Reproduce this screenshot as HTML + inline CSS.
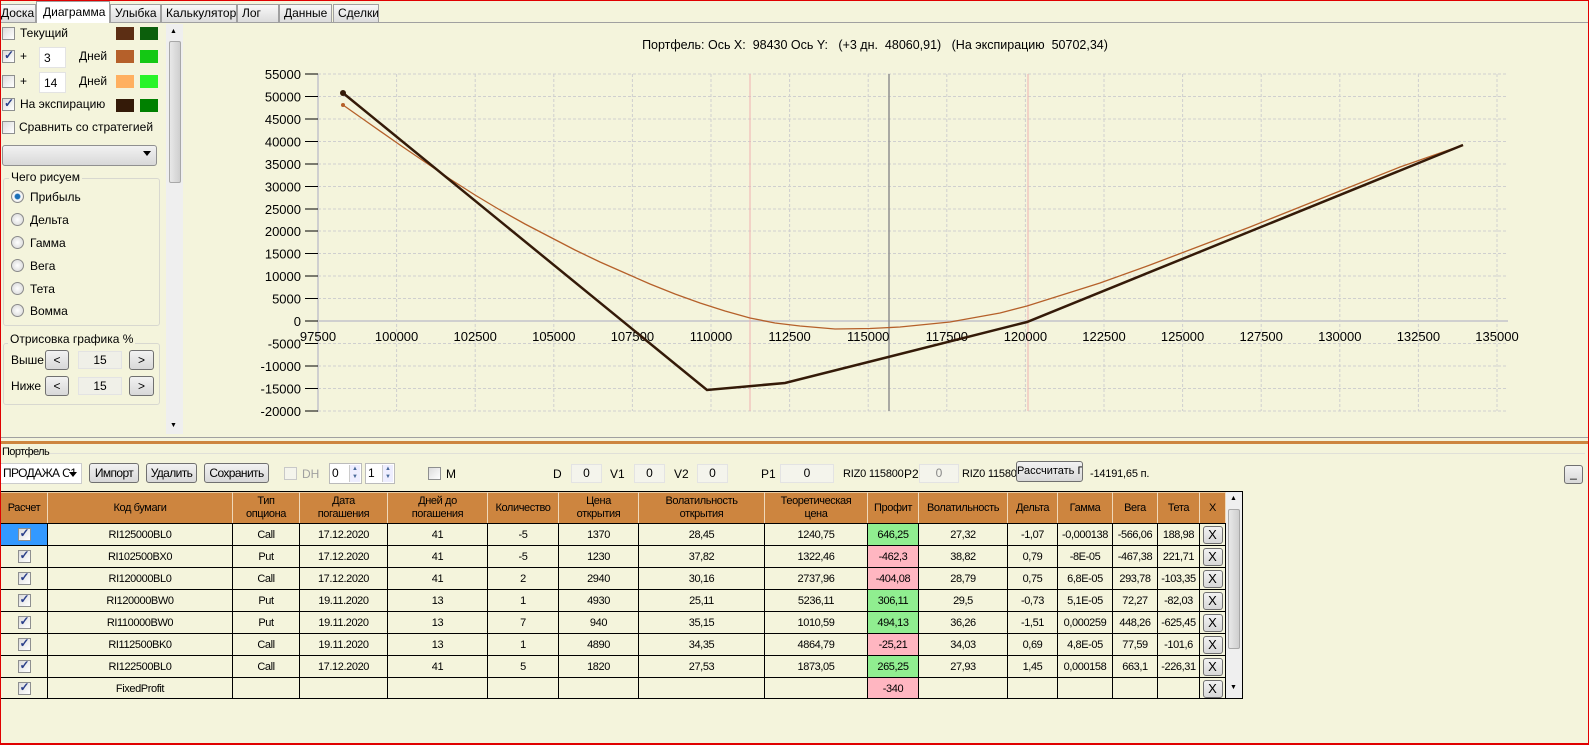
<!DOCTYPE html>
<html><head><meta charset="utf-8"><style>
*{box-sizing:border-box}
body{margin:0;width:1589px;height:745px;background:#f4f4dc;font-family:"Liberation Sans",sans-serif;font-size:12px;color:#000;position:relative;overflow:hidden}
.abs{position:absolute}
.frame{position:absolute;left:0;top:0;width:1589px;height:745px;border:1px solid #e00000;border-bottom:2px solid #e00000;pointer-events:none}
.tab{position:absolute;top:4px;height:18px;border:1px solid #a0a0a0;border-bottom:none;background:linear-gradient(#f8f8f8,#dcdcdc);font-size:12px;line-height:16px;padding-left:4px;white-space:nowrap;overflow:hidden}
.cb{position:absolute;width:13px;height:13px;border:1px solid #8e8f8f;background:linear-gradient(135deg,#dcdcdc,#fff)}
.cb.on::after{content:"✓";position:absolute;left:1px;top:-3px;font-size:12px;color:#2a3f8a;font-weight:bold}
.sw{position:absolute;width:18px;height:13px}
.inp{position:absolute;background:#fff;border:1px solid #e3e3e3;font-size:12px;padding-left:4px;line-height:20px;white-space:nowrap;overflow:hidden}
.btn{position:absolute;border:1px solid #707070;border-radius:3px;background:linear-gradient(#f2f2f2,#d8d8d8);text-align:center;font-size:12px;white-space:nowrap;overflow:hidden}
.rad{position:absolute;width:13px;height:13px;border-radius:50%;border:1px solid #8a8a8a;background:radial-gradient(#fff,#d4d4d4)}
.lbl{position:absolute;font-size:12px;white-space:nowrap}
.n{font-size:12px;letter-spacing:-0.6px}
.s{font-size:11px;letter-spacing:-0.2px}
table{border-collapse:collapse;font-family:"Liberation Sans",sans-serif;font-size:11px;letter-spacing:-0.4px}
td,th{border:1px solid #000;padding:0;text-align:center;white-space:nowrap;overflow:hidden}
th{background:#cd853f;font-weight:normal;height:31px;line-height:13px;border-color:#e8c9a0 #f0d8b8 #000 #f0d8b8}
td{height:22px}
.g{background:#90ee90}.r{background:#ffb6c1}
.x{display:inline-block;width:20px;height:18px;border:1px solid #707070;border-radius:3px;background:linear-gradient(#f2f2f2,#d8d8d8);line-height:16px;font-size:13px;letter-spacing:0}
.tc{display:inline-block;width:13px;height:13px;border:1px solid #8e8f8f;background:linear-gradient(135deg,#dcdcdc,#fff);position:relative;vertical-align:middle}
.tc::after{content:"✓";position:absolute;left:1px;top:-3px;font-size:12px;color:#2a3f8a;font-weight:bold}
.spin{position:absolute;right:1px;top:1px;width:11px;height:17px;border-left:1px solid #ccc;font-size:6px;line-height:8px;text-align:center;color:#4a6a9a;background:#eef}
</style></head><body>
<div class="tab" style="left:-4px;width:40px">Доска</div>
<div class="tab" style="left:36px;top:1px;height:22px;width:74px;background:#fff;z-index:2;line-height:20px;padding-left:6px">Диаграмма</div>
<div class="tab" style="left:110px;width:51px">Улыбка</div>
<div class="tab" style="left:161px;width:76px">Калькулятор</div>
<div class="tab" style="left:237px;width:42px">Лог</div>
<div class="tab" style="left:279px;width:53px">Данные</div>
<div class="tab" style="left:333px;width:46px">Сделки</div>
<div class="abs" style="left:0;top:22px;width:1589px;height:1px;background:#a0a0a0"></div>

<div class="cb" style="left:2px;top:27px"></div><div class="lbl" style="left:20px;top:26px">Текущий</div>
<div class="sw" style="left:116px;top:27px;background:#5c2e14"></div><div class="sw" style="left:140px;top:27px;background:#0c5f0c"></div>
<div class="cb on" style="left:2px;top:50px"></div><div class="lbl" style="left:20px;top:49px">+</div>
<div class="inp" style="left:39px;top:47px;width:27px;height:21px">3</div><div class="lbl" style="left:79px;top:49px">Дней</div>
<div class="sw" style="left:116px;top:50px;background:#b5602a"></div><div class="sw" style="left:140px;top:50px;background:#14c814"></div>
<div class="cb" style="left:2px;top:75px"></div><div class="lbl" style="left:20px;top:74px">+</div>
<div class="inp" style="left:39px;top:72px;width:27px;height:21px">14</div><div class="lbl" style="left:79px;top:74px">Дней</div>
<div class="sw" style="left:116px;top:75px;background:#ffb060"></div><div class="sw" style="left:140px;top:75px;background:#28f428"></div>
<div class="cb on" style="left:2px;top:98px"></div><div class="lbl" style="left:20px;top:97px">На экспирацию</div>
<div class="sw" style="left:116px;top:99px;background:#341a08"></div><div class="sw" style="left:140px;top:99px;background:#008000"></div>
<div class="cb" style="left:2px;top:121px"></div><div class="lbl" style="left:19px;top:120px">Сравнить со стратегией</div>
<div class="btn" style="left:2px;top:145px;width:155px;height:21px;border-color:#909090"><span style="position:absolute;right:5px;top:5px;border:4px solid transparent;border-top:5px solid #000"></span></div>
<div class="abs" style="left:3px;top:178px;width:157px;height:148px;border:1px solid #d8d8d0;border-radius:3px"></div>
<div class="lbl" style="left:9px;top:170px;background:#f4f4dc;padding:0 2px">Чего рисуем</div>
<div class="rad" style="left:11px;top:190px;background:radial-gradient(#1b6fb8 30%,#fff 45%,#ccc)"></div><div class="lbl" style="left:30px;top:190px">Прибыль</div>
<div class="rad" style="left:11px;top:213px"></div><div class="lbl" style="left:30px;top:213px">Дельта</div>
<div class="rad" style="left:11px;top:236px"></div><div class="lbl" style="left:30px;top:236px">Гамма</div>
<div class="rad" style="left:11px;top:259px"></div><div class="lbl" style="left:30px;top:259px">Вега</div>
<div class="rad" style="left:11px;top:282px"></div><div class="lbl" style="left:30px;top:282px">Тета</div>
<div class="rad" style="left:11px;top:304px"></div><div class="lbl" style="left:30px;top:304px">Вомма</div>
<div class="abs" style="left:3px;top:343px;width:157px;height:62px;border:1px solid #d8d8d0;border-radius:3px"></div>
<div class="lbl" style="left:8px;top:332px;background:#f4f4dc;padding:0 2px">Отрисовка графика %</div>
<div class="lbl" style="left:11px;top:353px">Выше</div>
<div class="btn" style="left:45px;top:350px;width:24px;height:20px;line-height:18px">&lt;</div>
<div class="inp" style="left:78px;top:351px;width:44px;height:18px;background:#f0f0e8;text-align:center;padding:0;line-height:16px">15</div>
<div class="btn" style="left:129px;top:350px;width:25px;height:20px;line-height:18px">&gt;</div>
<div class="lbl" style="left:11px;top:379px">Ниже</div>
<div class="btn" style="left:45px;top:376px;width:24px;height:20px;line-height:18px">&lt;</div>
<div class="inp" style="left:78px;top:377px;width:44px;height:18px;background:#f0f0e8;text-align:center;padding:0;line-height:16px">15</div>
<div class="btn" style="left:129px;top:376px;width:25px;height:20px;line-height:18px">&gt;</div>
<div class="abs" style="left:166px;top:24px;width:17px;height:410px;background:#efefef"></div>
<div class="abs" style="left:169px;top:41px;width:12px;height:142px;border:1px solid #a8a8a8;border-radius:2px;background:linear-gradient(90deg,#e8e8e8,#cfcfcf)"></div>
<div class="lbl" style="left:170px;top:28px;font-size:7px">▲</div>
<div class="lbl" style="left:170px;top:422px;font-size:7px">▼</div>

<svg class="abs" style="left:0;top:0" width="1589" height="440">
<text x="875" y="49" font-size="12.5" text-anchor="middle" font-family="Liberation Sans" xml:space="preserve">Портфель: Ось X:  98430 Ось Y:   (+3 дн.  48060,91)   (На экспирацию  50702,34)</text>
<g stroke="#cfcfcf" stroke-dasharray="3,2" stroke-width="1">
<line x1="318" y1="74" x2="1508" y2="74"/><line x1="318" y1="96.5" x2="1508" y2="96.5"/><line x1="318" y1="119" x2="1508" y2="119"/><line x1="318" y1="141.5" x2="1508" y2="141.5"/><line x1="318" y1="164" x2="1508" y2="164"/><line x1="318" y1="186.5" x2="1508" y2="186.5"/><line x1="318" y1="209" x2="1508" y2="209"/><line x1="318" y1="231" x2="1508" y2="231"/><line x1="318" y1="253.5" x2="1508" y2="253.5"/><line x1="318" y1="276" x2="1508" y2="276"/><line x1="318" y1="298.5" x2="1508" y2="298.5"/><line x1="318" y1="343.5" x2="1508" y2="343.5"/><line x1="318" y1="366" x2="1508" y2="366"/><line x1="318" y1="388.5" x2="1508" y2="388.5"/><line x1="318" y1="411" x2="1508" y2="411"/>
<line x1="396.6" y1="74" x2="396.6" y2="411"/><line x1="475.2" y1="74" x2="475.2" y2="411"/><line x1="553.8" y1="74" x2="553.8" y2="411"/><line x1="632.4" y1="74" x2="632.4" y2="411"/><line x1="711" y1="74" x2="711" y2="411"/><line x1="789.6" y1="74" x2="789.6" y2="411"/><line x1="868.2" y1="74" x2="868.2" y2="411"/><line x1="946.8" y1="74" x2="946.8" y2="411"/><line x1="1025.4" y1="74" x2="1025.4" y2="411"/><line x1="1104" y1="74" x2="1104" y2="411"/><line x1="1182.6" y1="74" x2="1182.6" y2="411"/><line x1="1261.2" y1="74" x2="1261.2" y2="411"/><line x1="1339.8" y1="74" x2="1339.8" y2="411"/><line x1="1418.4" y1="74" x2="1418.4" y2="411"/><line x1="1497" y1="74" x2="1497" y2="411"/>
</g>
<line x1="318" y1="321" x2="1508" y2="321" stroke="#cfcfcf" stroke-width="2"/>
<line x1="318" y1="74" x2="318" y2="412" stroke="#cfcfcf" stroke-width="2"/>
<line x1="750" y1="74" x2="750" y2="411" stroke="#f0b0b0"/>
<line x1="1028" y1="74" x2="1028" y2="411" stroke="#f0b0b0"/>
<line x1="889" y1="74" x2="889" y2="411" stroke="#909090" stroke-width="1.5"/>
<g stroke="#000" stroke-width="1">
<line x1="305" y1="74" x2="318" y2="74"/><line x1="305" y1="96.5" x2="318" y2="96.5"/><line x1="305" y1="119" x2="318" y2="119"/><line x1="305" y1="141.5" x2="318" y2="141.5"/><line x1="305" y1="164" x2="318" y2="164"/><line x1="305" y1="186.5" x2="318" y2="186.5"/><line x1="305" y1="209" x2="318" y2="209"/><line x1="305" y1="231" x2="318" y2="231"/><line x1="305" y1="253.5" x2="318" y2="253.5"/><line x1="305" y1="276" x2="318" y2="276"/><line x1="305" y1="298.5" x2="318" y2="298.5"/><line x1="305" y1="321" x2="318" y2="321"/><line x1="305" y1="343.5" x2="318" y2="343.5"/><line x1="305" y1="366" x2="318" y2="366"/><line x1="305" y1="388.5" x2="318" y2="388.5"/><line x1="305" y1="411" x2="318" y2="411"/>
</g>
<g font-size="13" font-family="Liberation Sans" text-anchor="end">
<text x="301" y="79">55000</text><text x="301" y="101.5">50000</text><text x="301" y="124">45000</text><text x="301" y="146.5">40000</text><text x="301" y="169">35000</text><text x="301" y="191.5">30000</text><text x="301" y="214">25000</text><text x="301" y="236">20000</text><text x="301" y="258.5">15000</text><text x="301" y="281">10000</text><text x="301" y="303.5">5000</text><text x="301" y="326">0</text><text x="301" y="348.5">-5000</text><text x="301" y="371">-10000</text><text x="301" y="393.5">-15000</text><text x="301" y="416">-20000</text>
</g>
<g font-size="13" font-family="Liberation Sans" text-anchor="middle">
<text x="318" y="341">97500</text><text x="396.6" y="341">100000</text><text x="475.2" y="341">102500</text><text x="553.8" y="341">105000</text><text x="632.4" y="341">107500</text><text x="711" y="341">110000</text><text x="789.6" y="341">112500</text><text x="868.2" y="341">115000</text><text x="946.8" y="341">117500</text><text x="1025.4" y="341">120000</text><text x="1104" y="341">122500</text><text x="1182.6" y="341">125000</text><text x="1261.2" y="341">127500</text><text x="1339.8" y="341">130000</text><text x="1418.4" y="341">132500</text><text x="1497" y="341">135000</text>
</g>
<polyline fill="none" stroke="#b5602a" stroke-width="1.3" points="343,105 370,124 400,145 425,162 450,179 475,195 500,210 525,224 550,237 575,250 600,262 625,273 650,284 675,294 700,303 725,311 750,318 775,323 800,326 835,329 870,328.5 900,327 950,322 1000,313 1027,306 1100,283 1150,265 1200,246 1250,227 1300,207 1350,187 1400,167 1463,145"/>
<circle cx="343" cy="105" r="2" fill="#b5602a"/>
<polyline fill="none" stroke="#341a08" stroke-width="2.5" points="343,93 707,390 785,383 1027,322 1463,145"/>
<circle cx="343" cy="93" r="3" fill="#341a08"/>
</svg>

<div class="abs" style="left:0;top:437px;width:1589px;height:1px;background:#a0a0a0"></div>
<div class="abs" style="left:0;top:441px;width:1589px;height:3px;background:#cd853f"></div>
<div class="abs" style="left:50px;top:453px;width:1535px;height:1px;background:#e0e0d8"></div>
<div class="lbl n" style="left:2px;top:446px;font-size:11px">Портфель</div>

<div class="inp n" style="left:0;top:463px;width:82px;height:21px;border-color:#ccc;padding-left:2px;line-height:19px">ПРОДАЖА С1<span style="position:absolute;right:4px;top:8px;border:4px solid transparent;border-top:5px solid #000;background:#fff"></span></div>
<div class="btn n" style="left:89px;top:463px;width:50px;height:20px;line-height:18px">Импорт</div>
<div class="btn n" style="left:146px;top:463px;width:51px;height:20px;line-height:18px">Удалить</div>
<div class="btn n" style="left:204px;top:463px;width:65px;height:20px;line-height:18px">Сохранить</div>
<div class="cb" style="left:284px;top:467px;border-color:#c8c8c8;background:#f4f4ec"></div><div class="lbl" style="left:302px;top:467px;color:#a0a0a0">DH</div>
<div class="inp" style="left:329px;top:463px;width:33px;height:21px;line-height:19px;padding-left:2px;border-color:#bbb">0<div class="spin">▲<br>▼</div></div>
<div class="inp" style="left:365px;top:463px;width:30px;height:21px;line-height:19px;padding-left:2px;border-color:#bbb">1<div class="spin">▲<br>▼</div></div>
<div class="cb" style="left:428px;top:467px"></div><div class="lbl" style="left:446px;top:467px">M</div>
<div class="lbl" style="left:553px;top:467px">D</div><div class="inp" style="left:571px;top:464px;width:31px;height:19px;background:#f4f4ec;text-align:center;padding:0;line-height:17px">0</div>
<div class="lbl" style="left:610px;top:467px">V1</div><div class="inp" style="left:634px;top:464px;width:31px;height:19px;background:#f4f4ec;text-align:center;padding:0;line-height:17px">0</div>
<div class="lbl" style="left:674px;top:467px">V2</div><div class="inp" style="left:697px;top:464px;width:31px;height:19px;background:#f4f4ec;text-align:center;padding:0;line-height:17px">0</div>
<div class="lbl" style="left:761px;top:467px">P1</div><div class="inp" style="left:780px;top:464px;width:54px;height:19px;background:#f4f4ec;text-align:center;padding:0;line-height:17px">0</div>
<div class="lbl s" style="left:843px;top:468px">RIZ0 115800</div>
<div class="lbl" style="left:904px;top:467px">P2</div>
<div class="inp" style="left:919px;top:464px;width:40px;height:19px;background:#f4f4ec;text-align:center;padding:0;line-height:17px;color:#888">0</div>
<div class="lbl s" style="left:962px;top:468px">RIZ0 115800</div>
<div class="btn" style="left:1016px;top:461px;width:67px;height:21px;line-height:19px;font-size:11px">Рассчитать ГО</div>
<div class="lbl s" style="left:1090px;top:468px">-14191,65 п.</div>
<div class="btn" style="left:1564px;top:465px;width:19px;height:19px;line-height:14px">_</div>

<div class="abs" style="left:0;top:491px;width:1243px;height:208px;border:1px solid #000;border-left:none;overflow:hidden">
<table style="position:absolute;left:0;top:0;width:1225px;table-layout:fixed">
<colgroup><col style="width:47px"><col style="width:185px"><col style="width:67px"><col style="width:88px"><col style="width:100px"><col style="width:71px"><col style="width:80px"><col style="width:126px"><col style="width:103px"><col style="width:51px"><col style="width:89px"><col style="width:50px"><col style="width:55px"><col style="width:45px"><col style="width:42px"><col style="width:26px"></colgroup>
<tr><th>Расчет</th><th>Код бумаги</th><th>Тип<br>опциона</th><th>Дата<br>погашения</th><th>Дней до<br>погашения</th><th>Количество</th><th>Цена<br>открытия</th><th>Волатильность<br>открытия</th><th>Теоретическая<br>цена</th><th>Профит</th><th>Волатильность</th><th>Дельта</th><th>Гамма</th><th>Вега</th><th>Тета</th><th>X</th></tr>
<tr><td style="background:#3399ff"><span class="tc"></span></td><td>RI125000BL0</td><td>Call</td><td>17.12.2020</td><td>41</td><td>-5</td><td>1370</td><td>28,45</td><td>1240,75</td><td class="g">646,25</td><td>27,32</td><td>-1,07</td><td>-0,000138</td><td>-566,06</td><td>188,98</td><td><span class="x">X</span></td></tr>
<tr><td><span class="tc"></span></td><td>RI102500BX0</td><td>Put</td><td>17.12.2020</td><td>41</td><td>-5</td><td>1230</td><td>37,82</td><td>1322,46</td><td class="r">-462,3</td><td>38,82</td><td>0,79</td><td>-8E-05</td><td>-467,38</td><td>221,71</td><td><span class="x">X</span></td></tr>
<tr><td><span class="tc"></span></td><td>RI120000BL0</td><td>Call</td><td>17.12.2020</td><td>41</td><td>2</td><td>2940</td><td>30,16</td><td>2737,96</td><td class="r">-404,08</td><td>28,79</td><td>0,75</td><td>6,8E-05</td><td>293,78</td><td>-103,35</td><td><span class="x">X</span></td></tr>
<tr><td><span class="tc"></span></td><td>RI120000BW0</td><td>Put</td><td>19.11.2020</td><td>13</td><td>1</td><td>4930</td><td>25,11</td><td>5236,11</td><td class="g">306,11</td><td>29,5</td><td>-0,73</td><td>5,1E-05</td><td>72,27</td><td>-82,03</td><td><span class="x">X</span></td></tr>
<tr><td><span class="tc"></span></td><td>RI110000BW0</td><td>Put</td><td>19.11.2020</td><td>13</td><td>7</td><td>940</td><td>35,15</td><td>1010,59</td><td class="g">494,13</td><td>36,26</td><td>-1,51</td><td>0,000259</td><td>448,26</td><td>-625,45</td><td><span class="x">X</span></td></tr>
<tr><td><span class="tc"></span></td><td>RI112500BK0</td><td>Call</td><td>19.11.2020</td><td>13</td><td>1</td><td>4890</td><td>34,35</td><td>4864,79</td><td class="r">-25,21</td><td>34,03</td><td>0,69</td><td>4,8E-05</td><td>77,59</td><td>-101,6</td><td><span class="x">X</span></td></tr>
<tr><td><span class="tc"></span></td><td>RI122500BL0</td><td>Call</td><td>17.12.2020</td><td>41</td><td>5</td><td>1820</td><td>27,53</td><td>1873,05</td><td class="g">265,25</td><td>27,93</td><td>1,45</td><td>0,000158</td><td>663,1</td><td>-226,31</td><td><span class="x">X</span></td></tr>
<tr><td><span class="tc"></span></td><td>FixedProfit</td><td></td><td></td><td></td><td></td><td></td><td></td><td></td><td class="r">-340</td><td></td><td></td><td></td><td></td><td></td><td><span class="x">X</span></td></tr>
</table>
<div class="abs" style="left:1226px;top:0;width:16px;height:206px;background:#efefef"></div>
<div class="abs" style="left:1228px;top:17px;width:12px;height:140px;border:1px solid #a8a8a8;border-radius:2px;background:linear-gradient(90deg,#e8e8e8,#cfcfcf)"></div>
<div class="lbl" style="left:1230px;top:3px;font-size:7px">▲</div>
<div class="lbl" style="left:1230px;top:192px;font-size:7px">▼</div>
</div>
<div class="frame"></div>
</body></html>
